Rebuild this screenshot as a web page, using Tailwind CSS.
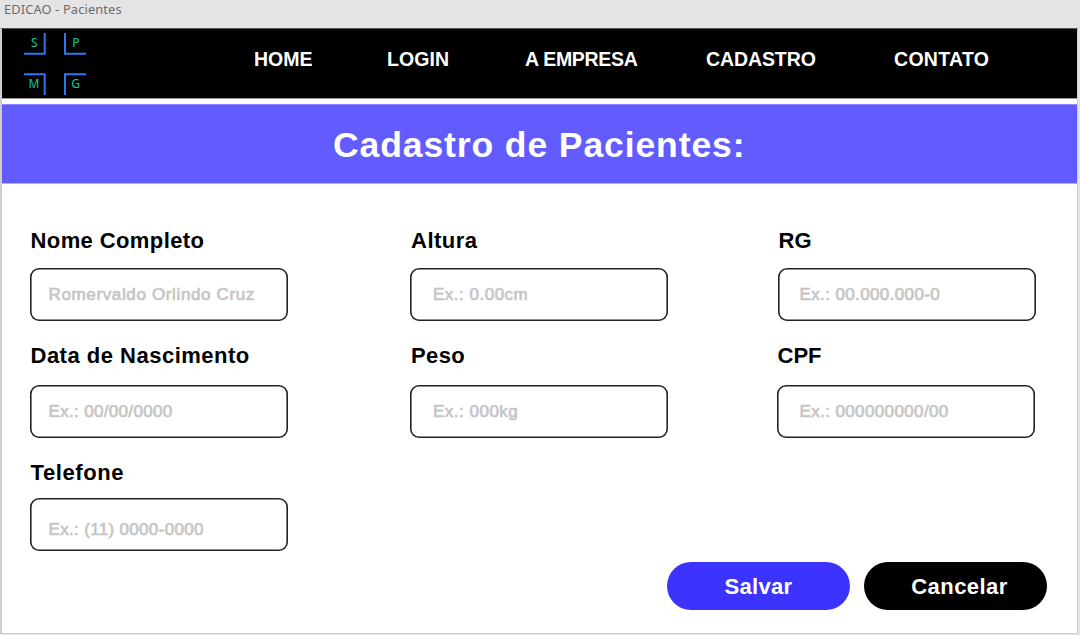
<!DOCTYPE html>
<html lang="pt-BR">
<head>
<meta charset="utf-8">
<title>EDICAO - Pacientes</title>
<script src="https://cdn.jsdelivr.net/npm/@tailwindcss/browser@4"></script>
</head>
<body class="h-[635px] w-[1080px] overflow-hidden bg-[#e4e4e4] font-['Liberation_Sans',sans-serif] font-normal">
<div class="h-[27px] pl-1 font-['Noto_Sans',sans-serif] text-[12.8px] leading-[19px] tracking-[0.15px] text-[#6b6b6b]">EDICAO - Pacientes</div>
<main class="mt-px h-[606px] w-[1078px] border-t border-r border-b border-l-2 border-[#cfcfcf] border-t-[#555] bg-white">
  <header class="flex h-[70px] w-[1075px] border-b border-[#999] bg-black">
    <svg class="ml-[20px] mt-[2px] h-[66px] w-[68px] shrink-0" viewBox="22 31 68 66" fill="none">
      <g stroke="#2b78f4" stroke-width="2">
        <path d="M24 53.8H45M44.7 33V54.7"/><path d="M65 33V54.7M64 53.8H86"/>
        <path d="M24 74.3H45.7M44.7 73.5V95"/><path d="M86 74.3H64M65 73.5V95"/>
      </g>
      <g fill="#16c79a" font-family="Noto Sans, sans-serif" font-size="12" font-weight="400" text-anchor="middle">
        <text x="34.3" y="47">S</text><text x="75.9" y="47">P</text><text x="34" y="88">M</text><text x="75.5" y="88">G</text>
      </g>
    </svg>
    <nav class="ml-[164px] mt-[18px] flex text-[19.5px] leading-6 font-bold whitespace-nowrap text-white">
      <a class="w-[133px]">HOME</a>
      <a class="w-[138px] tracking-[0.1px]">LOGIN</a>
      <a class="w-[181px] tracking-[-0.3px]">A EMPRESA</a>
      <a class="w-[188px] tracking-[-0.1px]">CADASTRO</a>
      <a class="tracking-[0.3px]">CONTATO</a>
    </nav>
  </header>
  <h1 class="mt-[5px] flex h-[80px] w-[1075px] items-center border-y border-[#b3b0ff] border-t-[#8e89ff] bg-[#625cff] pt-[3px] pl-[331px] text-[35.5px] font-bold tracking-[0.9px] text-white">Cadastro de Pacientes:</h1>

  <form class="px-7 pt-[42px]">
    <div class="grid h-[115px] grid-cols-[380px_368px_258px]">
      <div>
        <label class="block pl-[0.5px] text-[22px] leading-[30px] font-bold tracking-[0.4px]">Nome Completo</label>
        <div class="mt-[12px] flex h-[53px] w-[258px] items-center rounded-[9px] shadow-[inset_0_0_0_1.6px_#222] pl-[18.5px] text-[17px] tracking-[0.64px] text-[#c6c6c6] [-webkit-text-stroke:0.7px_#c6c6c6]">Romervaldo Orlindo Cruz</div>
      </div>
      <div>
        <label class="block pl-px text-[22px] leading-[30px] font-bold tracking-[0.5px]">Altura</label>
        <div class="mt-[12px] flex h-[53px] w-[258px] items-center rounded-[9px] shadow-[inset_0_0_0_1.6px_#222] pl-[23px] text-[17px] tracking-[0.5px] text-[#c6c6c6] [-webkit-text-stroke:0.7px_#c6c6c6]">Ex.: 0.00cm</div>
      </div>
      <div>
        <label class="block pl-[0.5px] text-[22px] leading-[30px] font-bold">RG</label>
        <div class="mt-[12px] flex h-[53px] w-[258px] items-center rounded-[9px] shadow-[inset_0_0_0_1.6px_#222] pl-[21.5px] text-[17px] tracking-[0.38px] text-[#c6c6c6] [-webkit-text-stroke:0.7px_#c6c6c6]">Ex.: 00.000.000-0</div>
      </div>
    </div>
    <div class="grid h-[117px] grid-cols-[380px_367px_258px]">
      <div>
        <label class="block pl-[0.5px] text-[22px] leading-[30px] font-bold tracking-[0.5px]">Data de Nascimento</label>
        <div class="mt-[14px] flex h-[53px] w-[258px] items-center rounded-[9px] shadow-[inset_0_0_0_1.6px_#222] pl-[18.5px] text-[17px] tracking-[0.33px] text-[#c6c6c6] [-webkit-text-stroke:0.7px_#c6c6c6]">Ex.: 00/00/0000</div>
      </div>
      <div>
        <label class="block pl-px text-[22px] leading-[30px] font-bold tracking-[0.4px]">Peso</label>
        <div class="mt-[14px] flex h-[53px] w-[258px] items-center rounded-[9px] shadow-[inset_0_0_0_1.6px_#222] pl-[23px] text-[17px] tracking-[0.5px] text-[#c6c6c6] [-webkit-text-stroke:0.7px_#c6c6c6]">Ex.: 000kg</div>
      </div>
      <div>
        <label class="block pl-[0.5px] text-[22px] leading-[30px] font-bold">CPF</label>
        <div class="mt-[14px] flex h-[53px] w-[258px] items-center rounded-[9px] shadow-[inset_0_0_0_1.6px_#222] pl-[22.5px] text-[17px] tracking-[0.38px] text-[#c6c6c6] [-webkit-text-stroke:0.7px_#c6c6c6]">Ex.: 000000000/00</div>
      </div>
    </div>
    <div class="h-[104px]">
      <label class="block pl-[0.5px] text-[22px] leading-[30px] font-bold tracking-[0.6px]">Telefone</label>
      <div class="mt-[10.4px] flex h-[53px] w-[258px] items-center rounded-[9px] shadow-[inset_0_0_0_1.6px_#222] pt-[9px] pl-[18.5px] text-[17px] tracking-[0.33px] text-[#c6c6c6] [-webkit-text-stroke:0.7px_#c6c6c6]">Ex.: (11) 0000-0000</div>
    </div>
    <div class="ml-[637px] flex gap-[14px] text-[22px] font-bold text-white">
      <button type="button" class="h-12 w-[183px] rounded-full bg-[#3c33ff] tracking-[0.3px]">Salvar</button>
      <button type="button" class="h-12 w-[183px] rounded-full bg-black pl-2 tracking-[0.45px]">Cancelar</button>
    </div>
  </form>
</main>
</body>
</html>
